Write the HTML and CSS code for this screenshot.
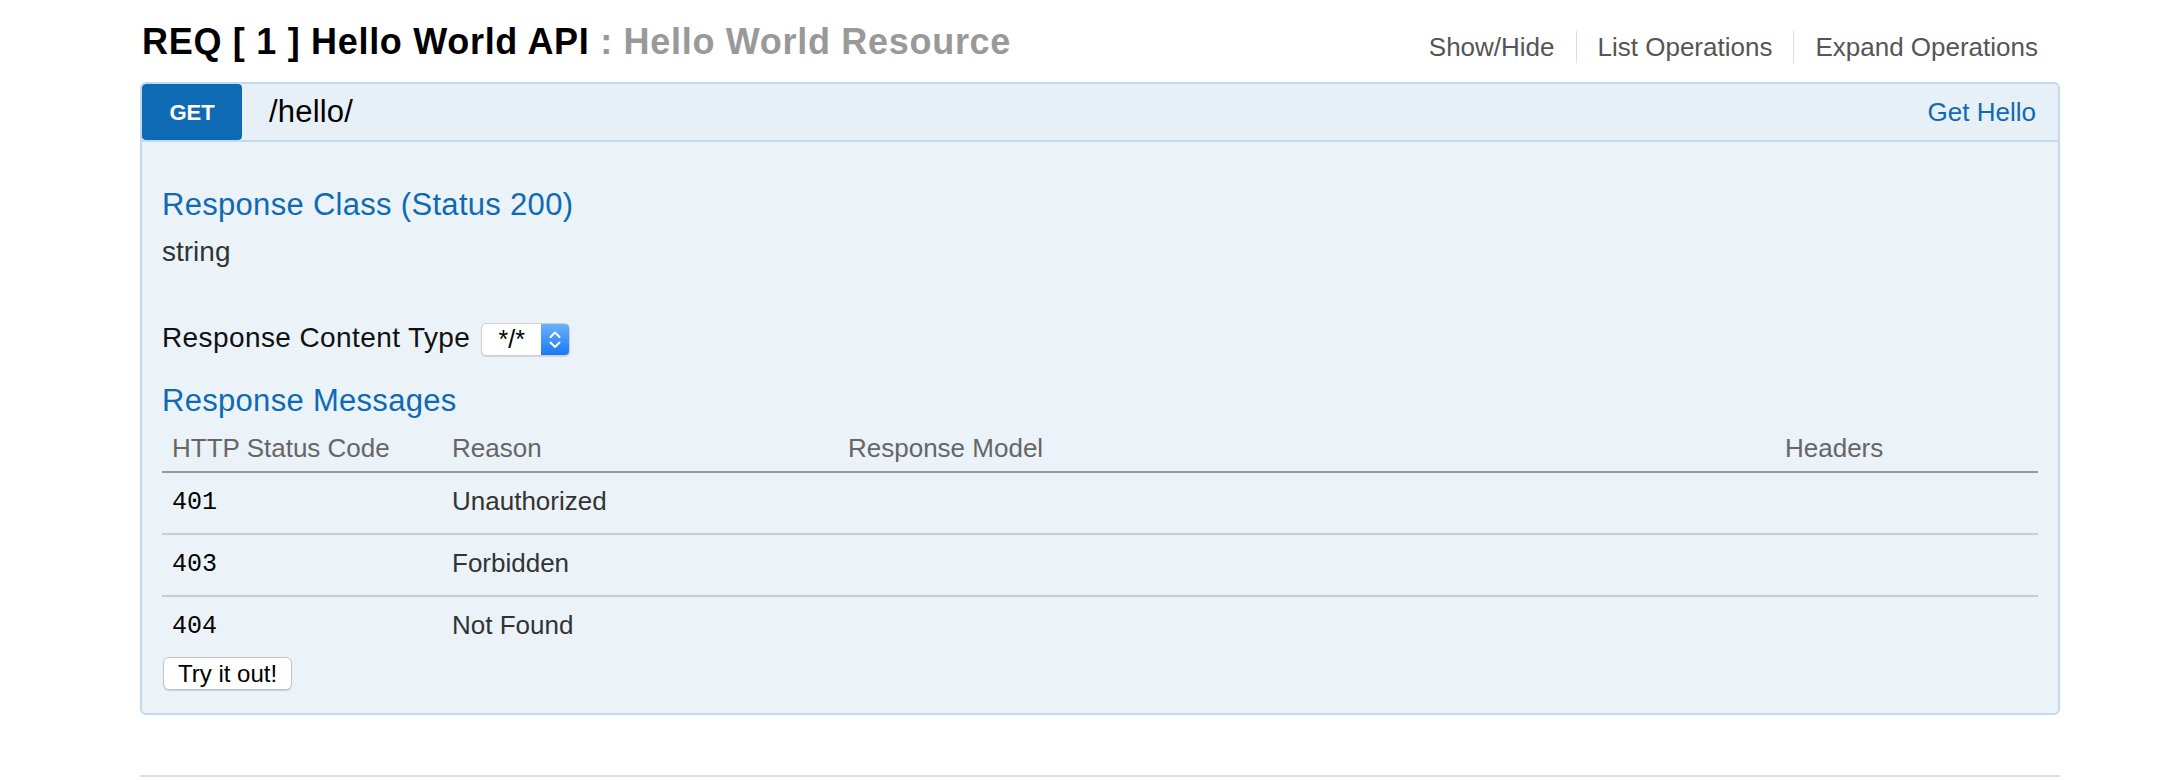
FILE: index.html
```html
<!DOCTYPE html>
<html lang="en">
<head>
<meta charset="utf-8">
<title>Hello World API</title>
<link rel="stylesheet" href="styles.css">
</head>
<body>
<div class="wrap">
  <div class="heading">
    <h2 class="title">REQ [ 1 ] Hello World API <span class="title-sub">: Hello World Resource</span></h2>
    <ul class="options">
      <li class="opt">Show/Hide</li>
      <li class="opt">List Operations</li>
      <li class="opt">Expand Operations</li>
    </ul>
  </div>

  <div class="operation">
    <div class="op-heading">
      <span class="method">GET</span>
      <span class="path">/hello/</span>
      <span class="summary">Get Hello</span>
    </div>
    <div class="op-content">
      <h4 class="section-title">Response Class (Status 200)</h4>
      <div class="model">string</div>

      <div class="content-type">
        <span class="ct-label">Response Content Type</span>
        <span class="select">
          <span class="select-value">*/*</span>
          <span class="select-arrows">
            <svg width="28" height="31" viewBox="0 0 28 31"><path d="M9.5 13 L14 8.5 L18.5 13" fill="none" stroke="#fff" stroke-width="2" stroke-linecap="round" stroke-linejoin="round"/><path d="M9.5 18.5 L14 23 L18.5 18.5" fill="none" stroke="#fff" stroke-width="2" stroke-linecap="round" stroke-linejoin="round"/></svg>
          </span>
        </span>
      </div>

      <h4 class="section-title messages-title">Response Messages</h4>
      <table class="messages">
        <colgroup>
          <col class="c1"><col class="c2"><col class="c3"><col class="c4">
        </colgroup>
        <thead>
          <tr><th>HTTP Status Code</th><th>Reason</th><th>Response Model</th><th>Headers</th></tr>
        </thead>
        <tbody>
          <tr><td class="code">401</td><td>Unauthorized</td><td></td><td></td></tr>
          <tr><td class="code">403</td><td>Forbidden</td><td></td><td></td></tr>
          <tr><td class="code">404</td><td>Not Found</td><td></td><td></td></tr>
        </tbody>
      </table>
      <button class="try" type="button">Try it out!</button>
    </div>
  </div>

  <div class="divider"></div>
</div>
</body>
</html>
```

FILE: styles.css
```css
* { box-sizing: border-box; }

body {
  margin: 0;
  background: #fff;
  font-family: "Liberation Sans", Arial, Helvetica, sans-serif;
  color: #333;
}

.wrap {
  margin-left: 140px;
  width: 1920px;
}

.heading {
  display: flex;
  justify-content: space-between;
  align-items: flex-start;
  height: 82px;
}

.title {
  margin: 22px 0 0 2px;
  font-size: 36px;
  line-height: 40px;
  font-weight: bold;
  letter-spacing: 0.7px;
  color: #000;
}

.title-sub {
  color: #999;
}

.options {
  list-style: none;
  margin: 31px 22px 0 0;
  padding: 0;
  display: flex;
}

.opt {
  font-size: 26px;
  line-height: 32px;
  color: #555;
  padding: 0 21px;
  border-right: 1px solid #ddd;
}

.opt:last-child {
  border-right: none;
  padding-right: 0;
}

.operation {
  border: 2px solid #c3d9ec;
  border-radius: 6px;
  background: #ebf3f9;
  overflow: hidden;
}

.op-heading {
  display: flex;
  align-items: center;
  height: 58px;
  background: #e7f0f7;
  border-bottom: 2px solid #c3d9ec;
}

.method {
  display: flex;
  align-items: center;
  justify-content: center;
  width: 100px;
  height: 56px;
  background: #0f6ab4;
  color: #fff;
  font-size: 22px;
  font-weight: bold;
  border-radius: 4px;
  padding-top: 2px;
}

.path {
  margin-left: 27px;
  font-size: 31px;
  letter-spacing: 0.2px;
  color: #000;
}

.summary {
  margin-left: auto;
  margin-right: 22px;
  font-size: 26px;
  color: #0f6ab4;
}

.op-content {
  padding: 20px 20px 23px 20px;
}

.section-title {
  margin: 0;
  padding: 25px 0 12px;
  font-size: 31px;
  line-height: 36px;
  font-weight: normal;
  letter-spacing: 0.3px;
  color: #0f6ab4;
}

.messages-title {
  padding-bottom: 9px;
}

.model {
  font-size: 28px;
  line-height: 34px;
  color: #333;
}

.content-type {
  display: flex;
  align-items: flex-start;
  margin-top: 52px;
  margin-bottom: 2px;
}

.ct-label {
  font-size: 28px;
  line-height: 34px;
  letter-spacing: 0.4px;
  color: #111;
}

.select {
  display: flex;
  margin: 2px 0 0 11px;
  width: 89px;
  height: 33px;
  border: 1px solid #cfcfcf;
  border-radius: 5px;
  background: #fff;
  box-shadow: 0 1px 1px rgba(0, 0, 0, 0.12);
  overflow: hidden;
}

.select-value {
  flex: 1;
  text-align: center;
  font-size: 25px;
  line-height: 31px;
  color: #000;
}

.select-arrows {
  display: flex;
  width: 28px;
  background: linear-gradient(#6ab2fa, #1a78f5);
}

.messages {
  width: 1876px;
  table-layout: fixed;
  border-collapse: collapse;
}

.c1 { width: 280px; }
.c2 { width: 396px; }
.c3 { width: 937px; }
.c4 { width: 263px; }

.messages th {
  text-align: left;
  font-weight: normal;
  font-size: 26px;
  line-height: 30px;
  color: #666;
  padding: 5px 10px 8px;
  border-bottom: 2px solid #999;
}

.messages td {
  height: 60px;
  font-size: 26px;
  line-height: 30px;
  color: #333;
  padding: 13px 10px 17px;
  vertical-align: top;
}

.messages tbody tr + tr td {
  height: 61px;
  border-top: 2px solid #cdcdcd;
}

.messages tbody tr:last-child td {
  height: 60px;
}

.messages td.code {
  font-family: "Liberation Mono", "DejaVu Sans Mono", monospace;
  font-size: 25px;
  color: #000;
  padding-top: 15px;
  padding-bottom: 15px;
}

.try {
  display: block;
  margin: 0 0 0 1px;
  height: 33px;
  padding: 0 14px;
  font-family: "Liberation Sans", Arial, sans-serif;
  font-size: 24px;
  line-height: 27px;
  color: #000;
  background: #fff;
  border: 1px solid #c4c4c4;
  border-radius: 6px;
  box-shadow: 0 1px 1px rgba(0, 0, 0, 0.15);
}

.divider {
  margin-top: 60px;
  height: 2px;
  background: #ddd;
}
```
